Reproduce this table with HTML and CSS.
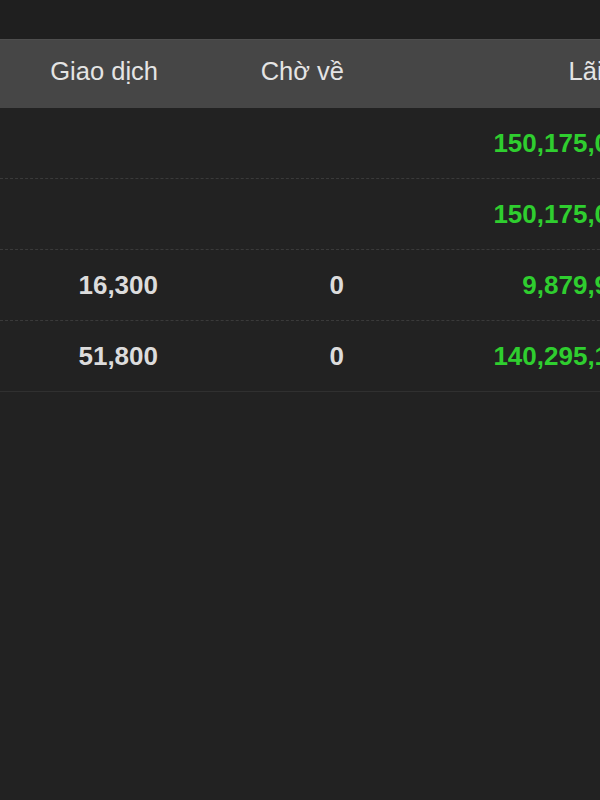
FILE: index.html
```html
<!doctype html>
<html>
<head>
  <title>Tài sản</title>
  <meta charset="utf-8">
  <link rel="stylesheet" href="styles.css">
</head>
<body>
  <div class="topbar"></div>
  <div class="table">
    <div class="row head">
      <div>Giao dịch</div>
      <div>Chờ về</div>
      <div>Lãi/Lỗ</div>
    </div>
    <div class="row dotted">
      <div></div>
      <div></div>
      <div class="up">150,175,000</div>
    </div>
    <div class="row dotted">
      <div></div>
      <div></div>
      <div class="up">150,175,000</div>
    </div>
    <div class="row dotted">
      <div>16,300</div>
      <div>0</div>
      <div class="up">9,879,900</div>
    </div>
    <div class="row">
      <div>51,800</div>
      <div>0</div>
      <div class="up">140,295,100</div>
    </div>
  </div>
</body>
</html>
```

FILE: styles.css
```css
body{
  margin:0;
  background:#222222;
  font-family:"Liberation Sans", Arial, sans-serif;
  color:#dcdcdc;
  overflow:hidden;
  width:600px;
  height:800px;
}
.topbar{
  height:39px;
  background:#1f1f1f;
}
.table{
  width:640px;
}
.row{
  display:grid;
  grid-template-columns:158px 186px 294px;
  height:70px;
  align-items:center;
  text-align:right;
  font-size:26px;
  font-weight:bold;
  border-bottom:1px solid #303030;
}
.row.dotted{
  border-bottom:1px dashed #3a3a3a;
}
.row.head{
  height:69px;
  box-sizing:border-box;
  padding-bottom:5px;
  background:#464646;
  border-top:1px solid #4e4e4e;
  border-bottom:none;
  font-size:25.5px;
  font-weight:normal;
  color:#e4e4e4;
}
.up{
  color:#2fce2f;
}
```
